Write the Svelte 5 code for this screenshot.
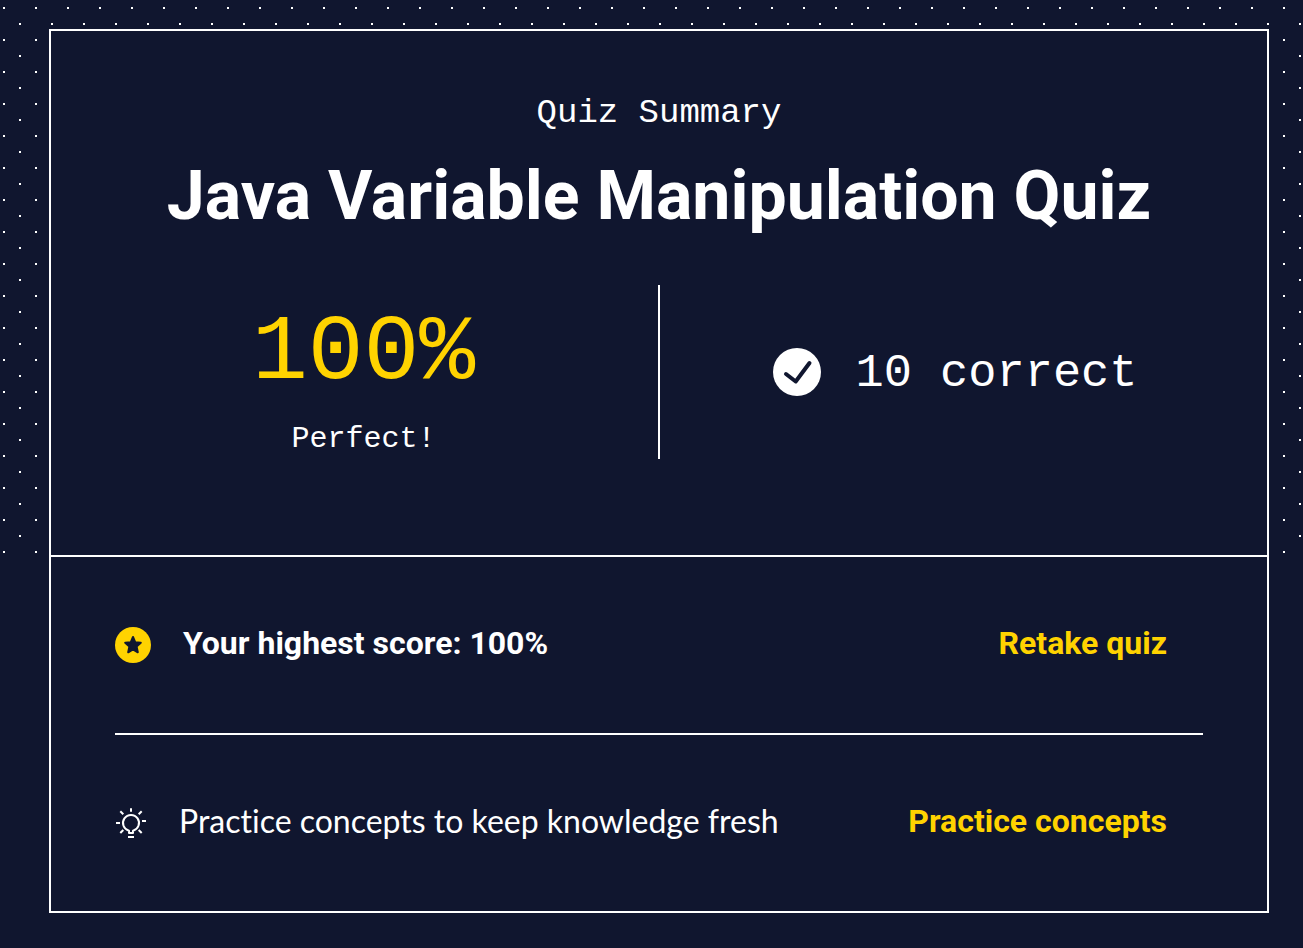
<script>
  const title = 'Java Variable Manipulation Quiz';
  const score = 100;
  const correct = 10;
</script>

<main class="page">
  <article class="card">
    <section class="summary">
      <p class="eyebrow">Quiz Summary</p>
      <h1>{title}</h1>
      <div class="results">
        <div class="score">
          <strong>{score}%</strong>
          <span>Perfect!</span>
        </div>
        <div class="correct">
          <svg width="48" height="48" viewBox="0 0 48 48" aria-hidden="true">
            <circle cx="24" cy="24" r="24" fill="#fff" />
            <path d="M13 26l9.700 7.500L36.500 15" fill="none" stroke="#10162f" stroke-width="4" stroke-linecap="round" stroke-linejoin="round" />
          </svg>
          <span>{correct} correct</span>
        </div>
      </div>
    </section>

    <ul class="actions">
      <li>
        <svg width="36" height="36" viewBox="0 0 36 36" aria-hidden="true">
          <circle cx="18" cy="18" r="18" fill="#ffd300" />
          <path d="M18 10L20.200 15.200L25.800 15.700L21.600 19.500L22.800 25.300L18 22.300L13.200 25.300L14.400 19.500L10.200 15.700L15.800 15.200Z" fill="#10162f" stroke="#10162f" stroke-width="2" stroke-linejoin="round" />
        </svg>
        <span class="label strong">Your highest score: {score}%</span>
        <a href="#retake">Retake quiz</a>
      </li>
      <li>
        <svg width="32" height="32" viewBox="0 0 32 32" fill="none" stroke="#fff" stroke-width="2" stroke-linejoin="round" aria-hidden="true">
          <path d="M14 26v-2.300A8 8 0 1 1 18 23.700V26z" />
          <path d="M13 30h6M16 1.300v3.400M1 16h4M27 14h4M5.300 4.300l3 3M26.700 4.300l-3 3M5.300 26l3-3M26.700 26l-3-3" />
        </svg>
        <span class="label">Practice concepts to keep knowledge fresh</span>
        <a href="#practice">Practice concepts</a>
      </li>
    </ul>
  </article>
</main>

<style>
  :global(body) {
    margin: 0;
    background: #10162f;
  }
  .page {
    box-sizing: border-box;
    position: relative;
    isolation: isolate;
    padding: 29px 34px 35px 49px;
    color: #fff;
    font-family: Lato, sans-serif;
    font-variant-ligatures: none;
    background:
      conic-gradient(from 90deg at 30px 30px, #fff 25%, transparent 0) 5px 9px / 32px 32px,
      conic-gradient(from 90deg at 30px 30px, #fff 25%, transparent 0) 21px 25px / 32px 32px;
  }
  /* Plain backdrop below the dotted band */
  .page::after {
    content: '';
    position: absolute;
    z-index: -1;
    inset: 556px 0 0;
    background: #10162f;
  }
  .card {
    border: 2px solid #fff;
    background: #10162f;
  }
  .summary {
    padding: 58px 0 96px;
    border-bottom: 2px solid #fff;
    text-align: center;
  }
  .eyebrow {
    margin: 0;
    font: 34px/48px 'Liberation Mono', monospace;
  }
  h1 {
    margin: 15px 0 45px;
    font-family: Roboto, sans-serif;
    font-size: 68px;
    line-height: 88px;
    font-weight: 700;
  }
  .results {
    display: grid;
    grid-template-columns: 1fr 1fr;
    padding: 0 22px 0 24px;
    font-family: 'Liberation Mono', monospace;
  }
  .score {
    display: flex;
    flex-direction: column;
    align-items: center;
    gap: 6px;
    padding: 10px 6px 0 0;
    border-right: 2px solid #fff;
  }
  .score strong {
    color: #ffd300;
    font-size: 93px;
    line-height: 118px;
    font-weight: 400;
  }
  .score span {
    font-size: 30px;
    line-height: 40px;
  }
  .correct {
    display: flex;
    align-items: center;
    justify-content: center;
    gap: 34px;
    padding-left: 6px;
    font-size: 47px;
    line-height: 56px;
  }
  .correct span {
    padding-top: 4px;
  }
  .actions {
    margin: 0;
    padding: 0 64px;
    list-style: none;
    font-size: 32px;
    line-height: 40px;
  }
  li {
    display: flex;
    align-items: center;
    gap: 32px;
    min-height: 176px;
    padding-right: 36px;
  }
  li + li {
    border-top: 2px solid #fff;
  }
  svg {
    flex: none;
  }
  .label {
    flex: 1;
    padding-bottom: 4px;
  }
  .strong {
    font-family: Roboto, sans-serif;
    font-weight: 700;
  }
  a {
    padding-bottom: 4px;
    color: #ffd300;
    font-family: Roboto, sans-serif;
    font-weight: 700;
    text-decoration: none;
  }
</style>
